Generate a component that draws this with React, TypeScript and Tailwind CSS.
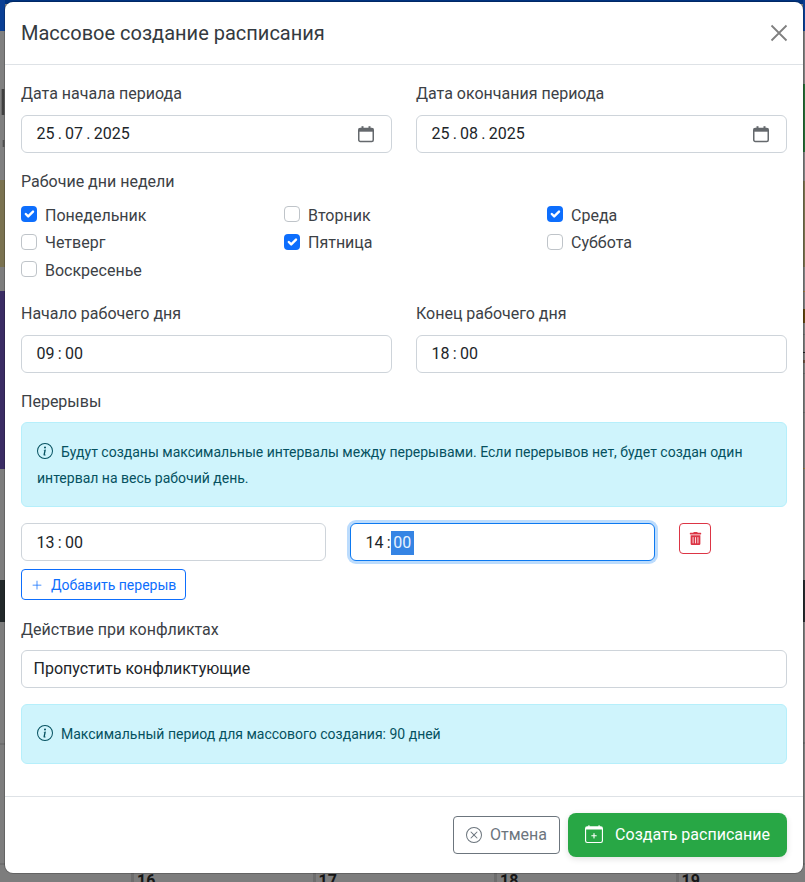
import React from "react";
import { FaTrashAlt } from "react-icons/fa";
import { BsCalendarPlus, BsInfoCircle, BsXCircle, BsPlusLg } from "react-icons/bs";

const CalendarGlyph = () => (
  <svg width="18" height="18" viewBox="0 0 18 18" className="text-[#65696d]" fill="none">
    <rect x="1.75" y="3.5" width="14.5" height="13" rx="1.5" stroke="currentColor" strokeWidth="1.5" />
    <rect x="1.75" y="3.5" width="14.5" height="3.2" fill="currentColor" />
    <rect x="4.5" y="1.2" width="2" height="3" fill="currentColor" />
    <rect x="11.5" y="1.2" width="2" height="3" fill="currentColor" />
  </svg>
);

const DateField = ({ d, m, y }: { d: string; m: string; y: string }) => (
  <div className="flex h-[38px] items-center justify-between rounded-md border border-[#ced4da] bg-white pl-[14.5px] pr-[16px] text-[#212529]">
    <span className="flex gap-[3.2px]">
      <span>{d}</span><span>.</span><span>{m}</span><span>.</span><span>{y}</span>
    </span>
    <CalendarGlyph />
  </div>
);

const TimeField = ({ h, m, className = "" }: { h: string; m: string; className?: string }) => (
  <div className={`${className} flex h-[38px] items-center gap-[3.3px] rounded-md border border-[#ced4da] bg-white pl-[14.5px] text-[#212529]`}>
    <span>{h}</span><span>:</span><span>{m}</span>
  </div>
);

const Label = ({ children, className = "mb-2" }: { children: React.ReactNode; className?: string }) => (
  <div className={`${className} leading-[25.6px] text-[#3c4146]`}>{children}</div>
);

const Check = ({ label, on }: { label: string; on?: boolean }) => (
  <div className="mb-[2px] flex h-[25.6px] items-start gap-2 leading-[25.6px]">
    {on ? (
      <span className="mt-[3.6px] flex h-4 w-4 items-center justify-center rounded bg-[#0d6efd]">
        <svg width="16" height="16" viewBox="0 0 20 20" fill="none">
          <path d="M6 10l3 3 6-6" stroke="#fff" strokeWidth="3" strokeLinecap="round" strokeLinejoin="round" />
        </svg>
      </span>
    ) : (
      <span className="mt-[3.6px] h-4 w-4 rounded border border-[#bfc4c9] bg-white" />
    )}
    <span className="text-[#3c4146]">{label}</span>
  </div>
);

const Alert = ({ children }: { children: React.ReactNode }) => (
  <div className="rounded-md border border-[#b6effb] bg-[#cff4fc] pb-[15px] pl-[15px] pr-4 pt-[17px] text-sm leading-[25.6px] text-[#055160]">
    {children}
  </div>
);

const InfoIcon = () => <BsInfoCircle size={16} className="mr-2 inline-block align-[-2px]" />;

const leftStrip = [
  "h-[31px] bg-[#0a3f94]",
  "h-[58px] bg-[#808080]",
  "h-[26px] bg-[linear-gradient(90deg,#808080_20%,#2a2a2a_60%,#808080_100%)]",
  "h-[25px] bg-[#808080]",
  "h-[7px] bg-[linear-gradient(90deg,#808080_40%,#4f4f4f_70%,#808080_100%)]",
  "h-[33px] bg-[#808080]",
  "h-[87px] bg-[#7a7250]",
  "h-[24px] bg-[#7d7d7d]",
  "h-[178px] bg-[#3a2c64]",
  "h-[111px] bg-[#7d7d7d]",
  "h-[42px] bg-[#22282a]",
  "h-[121px] bg-[#7d7d7d]",
  "h-[2px] bg-[#707070]",
  "h-[118px] bg-[#7d7d7d]",
  "h-[2px] bg-[#707070]",
  "h-[17px] bg-[#7d7d7d]",
];

const rightStrip = [
  "h-[31px] bg-[#0a3f94]",
  "h-[53px] bg-[#808080]",
  "h-[68px] bg-[#256b35]",
  "h-[29px] bg-[#808080]",
  "h-[86px] bg-[#7a7250]",
  "h-[24px] bg-[#808080]",
  "h-[1px] bg-[#9a7a3c]",
  "h-[17px] bg-[#7d7d7d]",
  "h-[14px] bg-[#5e4410]",
  "h-[11px] bg-[#7d7d7d]",
  "h-[1px] bg-[#6d6d6d]",
  "h-[17px] bg-[#7d7d7d]",
  "h-[1px] bg-[#222222]",
  "h-[7px] bg-[#7d7d7d]",
  "h-[3px] bg-[#6a5040]",
  "h-[10px] bg-[#7d7d7d]",
  "h-[1px] bg-[#6d6d6d]",
  "h-[38px] bg-[#7d7d7d]",
  "h-[1px] bg-[#6d6d6d]",
  "h-[55px] bg-[#7d7d7d]",
  "h-[1px] bg-[#9a7a3c]",
  "h-[111px] bg-[#7d7d7d]",
  "h-[42px] bg-[#262a2e]",
  "h-[120px] bg-[#7d7d7d]",
  "h-[2px] bg-[#707070]",
  "h-[119px] bg-[#7d7d7d]",
  "h-[2px] bg-[#707070]",
  "h-[17px] bg-[#7d7d7d]",
];

export default function App() {
  return (
    <div className="relative h-[882px] w-[805px] overflow-hidden bg-[#7d7d7d] font-['Roboto',sans-serif] text-base">
      <div className="flex h-full">
        <div className="w-[5px] shrink-0">
          {leftStrip.map((c, i) => (
            <div key={i} className={c} />
          ))}
        </div>
        <div className="flex min-w-0 flex-1 flex-col">
          <div className="h-[4px] bg-[#00337f]" />
          <div className="flex-1" />
          <div className="flex h-[9px] pl-[126px]">
            {["16", "17", "18", "19"].map((n) => (
              <div key={n} className="h-[30px] w-[181.5px] shrink-0 border-l-[3px] border-[#6d6d6d] pl-[3px] text-base font-bold leading-[16px] text-[#161616]">
                {n}
              </div>
            ))}
          </div>
        </div>
        <div className="w-[2px] shrink-0">
          {rightStrip.map((c, i) => (
            <div key={i} className={c} />
          ))}
        </div>
      </div>

      <div className="absolute left-[5px] top-[2px] flex h-[871px] w-[798px] flex-col rounded-lg bg-white shadow-[0_0_0_1px_rgba(0,0,0,0.2)]">
        <div className="flex h-[63px] items-center justify-between border-b border-[#dee2e6] px-4">
          <h1 className="text-[20px] font-normal text-[#343a40]">Массовое создание расписания</h1>
          <svg width="18" height="18" viewBox="0 0 18 18" fill="none" className="-mr-[1px]">
            <path d="M1.5 1.5l15 15M16.5 1.5l-15 15" stroke="#808080" strokeWidth="1.8" />
          </svg>
        </div>

        <div className="flex flex-1 flex-col p-4">
          <div className="mb-4 grid grid-cols-2 gap-6">
            <div>
              <Label>Дата начала периода</Label>
              <DateField d="25" m="07" y="2025" />
            </div>
            <div>
              <Label>Дата окончания периода</Label>
              <DateField d="25" m="08" y="2025" />
            </div>
          </div>

          <Label className="mb-[8.4px]">Рабочие дни недели</Label>
          <div className="mb-[15.6px] grid grid-cols-[263px_263px_1fr]">
            <Check label="Понедельник" on />
            <Check label="Вторник" />
            <Check label="Среда" on />
            <Check label="Четверг" />
            <Check label="Пятница" on />
            <Check label="Суббота" />
            <Check label="Воскресенье" />
          </div>

          <div className="mb-4 grid grid-cols-2 gap-6">
            <div>
              <Label>Начало рабочего дня</Label>
              <TimeField h="09" m="00" />
            </div>
            <div>
              <Label>Конец рабочего дня</Label>
              <TimeField h="18" m="00" />
            </div>
          </div>

          <Label>Перерывы</Label>
          <Alert>
            <InfoIcon />
            Будут созданы максимальные интервалы между перерывами. Если перерывов нет, будет создан один интервал на весь рабочий день.
          </Alert>

          <div className="mt-4 flex gap-6">
            <div className="w-[305px]">
              <TimeField h="13" m="00" className="pt-[1px]" />
            </div>
            <div className="flex h-[38px] w-[305px] items-center rounded-md border border-[#0d79f0] bg-white pl-[14.5px] pt-[1px] text-[#212529] shadow-[0_0_0_3px_#bcdcfd]">
              <span>14</span>
              <span className="ml-[3.3px]">:</span>
              <span className="bg-[#3584e4] px-[2.5px] text-[#e8f2ff]">00</span>
            </div>
            <div className="flex h-[31px] w-8 items-center justify-center rounded border border-[#dc3545]">
              <FaTrashAlt size={13} className="text-[#dc3545]" />
            </div>
          </div>

          <div className="mt-2 flex h-[31px] w-[165px] items-center rounded border border-[#0d6efd] pl-[9px] text-sm text-[#0d6efd]">
            <BsPlusLg size={12} className="mr-[8px]" />
            Добавить перерыв
          </div>

          <Label className="mb-[7px] mt-[17px]">Действие при конфликтах</Label>
          <div className="mb-4 flex h-[38px] items-center rounded-md border border-[#ced4da] bg-white pl-[11.5px] text-[#212529]">
            Пропустить конфликтующие
          </div>

          <Alert>
            <InfoIcon />
            Максимальный период для массового создания: 90 дней
          </Alert>
        </div>

        <div className="flex h-[77px] items-center justify-end gap-2 border-t border-[#dee2e6] px-4">
          <div className="flex h-[38px] w-[107px] items-center justify-center gap-2 rounded border border-[#6c757d] text-[#6c757d]">
            <BsXCircle size={16} />
            Отмена
          </div>
          <div className="flex h-11 w-[219px] items-center justify-center gap-3 rounded-lg bg-[#28a745] text-white shadow-[0_2px_6px_rgba(0,0,0,0.12)]">
            <BsCalendarPlus size={18} className="-mt-[2px]" />
            Создать расписание
          </div>
        </div>
      </div>
    </div>
  );
}
